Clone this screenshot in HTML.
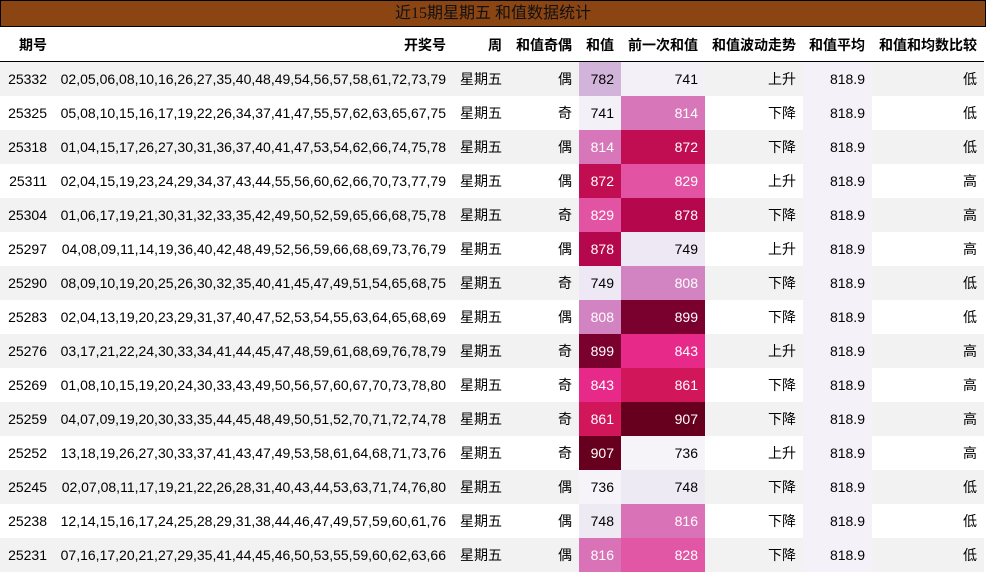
<!DOCTYPE html>
<html><head><meta charset="utf-8"><style>
body{margin:0;background:#fff;font-family:"Liberation Sans","Noto Sans CJK SC",sans-serif;font-size:14px;color:#000;}
.t{position:absolute;left:0;top:0;width:984px;height:25px;background:#8b4513;border:1px solid #000;text-align:center;line-height:25px;font-size:16px;font-family:"Liberation Serif","Noto Sans CJK SC",serif;color:#111;}
table{position:absolute;left:0;top:28px;border-collapse:collapse;width:984px;table-layout:fixed}
th{height:33px;font-weight:bold;text-align:right;padding:0 7px 0 0;border-bottom:1px solid #000;white-space:nowrap;overflow:visible}
td{height:34px;padding:0 7px 0 0;text-align:right;white-space:nowrap;overflow:visible}
tr>*:first-child{padding-right:8px}
tr>*:nth-child(2),tr>*:nth-child(3){padding-right:6px}
tbody tr:nth-child(odd) td{background:#f2f2f2}
tbody tr td.a{background:#f4f2f8 !important}
td.w{color:#fff}
</style></head><body>
<div class="t">近15期星期五 和值数据统计</div>
<table>
<colgroup><col style="width:55px"><col style="width:397px"><col style="width:56px"><col style="width:71px"><col style="width:42px"><col style="width:84px"><col style="width:98px"><col style="width:69px"><col style="width:112px"></colgroup>
<thead><tr><th>期号</th><th>开奖号</th><th>周</th><th>和值奇偶</th><th>和值</th><th>前一次和值</th><th>和值波动走势</th><th>和值平均</th><th>和值和均数比较</th></tr></thead>
<tbody>
<tr><td>25332</td><td>02,05,06,08,10,16,26,27,35,40,48,49,54,56,57,58,61,72,73,79</td><td>星期五</td><td>偶</td><td style="background:#d2b3d9!important">782</td><td style="background:#f3f0f7!important">741</td><td>上升</td><td class="a">818.9</td><td>低</td></tr>
<tr><td>25325</td><td>05,08,10,15,16,17,19,22,26,34,37,41,47,55,57,62,63,65,67,75</td><td>星期五</td><td>奇</td><td style="background:#f3f0f7">741</td><td class="w" style="background:#d777ba">814</td><td>下降</td><td class="a">818.9</td><td>低</td></tr>
<tr><td>25318</td><td>01,04,15,17,26,27,30,31,36,37,40,41,47,53,54,62,66,74,75,78</td><td>星期五</td><td>偶</td><td class="w" style="background:#d777ba!important">814</td><td class="w" style="background:#c10d51!important">872</td><td>下降</td><td class="a">818.9</td><td>低</td></tr>
<tr><td>25311</td><td>02,04,15,19,23,24,29,34,37,43,44,55,56,60,62,66,70,73,77,79</td><td>星期五</td><td>偶</td><td class="w" style="background:#c10d51">872</td><td class="w" style="background:#e254a3">829</td><td>上升</td><td class="a">818.9</td><td>高</td></tr>
<tr><td>25304</td><td>01,06,17,19,21,30,31,32,33,35,42,49,50,52,59,65,66,68,75,78</td><td>星期五</td><td>奇</td><td class="w" style="background:#e254a3!important">829</td><td class="w" style="background:#b5084c!important">878</td><td>下降</td><td class="a">818.9</td><td>高</td></tr>
<tr><td>25297</td><td>04,08,09,11,14,19,36,40,42,48,49,52,56,59,66,68,69,73,76,79</td><td>星期五</td><td>偶</td><td class="w" style="background:#b5084c">878</td><td style="background:#ede8f3">749</td><td>上升</td><td class="a">818.9</td><td>高</td></tr>
<tr><td>25290</td><td>08,09,10,19,20,25,26,30,32,35,40,41,45,47,49,51,54,65,68,75</td><td>星期五</td><td>奇</td><td style="background:#ede8f3!important">749</td><td class="w" style="background:#d283c1!important">808</td><td>下降</td><td class="a">818.9</td><td>低</td></tr>
<tr><td>25283</td><td>02,04,13,19,20,23,29,31,37,40,47,52,53,54,55,63,64,65,68,69</td><td>星期五</td><td>偶</td><td class="w" style="background:#d283c1">808</td><td class="w" style="background:#7a002d">899</td><td>下降</td><td class="a">818.9</td><td>低</td></tr>
<tr><td>25276</td><td>03,17,21,22,24,30,33,34,41,44,45,47,48,59,61,68,69,76,78,79</td><td>星期五</td><td>奇</td><td class="w" style="background:#7a002d!important">899</td><td class="w" style="background:#e7298a!important">843</td><td>上升</td><td class="a">818.9</td><td>高</td></tr>
<tr><td>25269</td><td>01,08,10,15,19,20,24,30,33,43,49,50,56,57,60,67,70,73,78,80</td><td>星期五</td><td>奇</td><td class="w" style="background:#e7298a">843</td><td class="w" style="background:#d11659">861</td><td>下降</td><td class="a">818.9</td><td>高</td></tr>
<tr><td>25259</td><td>04,07,09,19,20,30,33,35,44,45,48,49,50,51,52,70,71,72,74,78</td><td>星期五</td><td>奇</td><td class="w" style="background:#d11659!important">861</td><td class="w" style="background:#67001f!important">907</td><td>下降</td><td class="a">818.9</td><td>高</td></tr>
<tr><td>25252</td><td>13,18,19,26,27,30,33,37,41,43,47,49,53,58,61,64,68,71,73,76</td><td>星期五</td><td>奇</td><td class="w" style="background:#67001f">907</td><td style="background:#f7f4f9">736</td><td>上升</td><td class="a">818.9</td><td>高</td></tr>
<tr><td>25245</td><td>02,07,08,11,17,19,21,22,26,28,31,40,43,44,53,63,71,74,76,80</td><td>星期五</td><td>偶</td><td style="background:#f7f4f9!important">736</td><td style="background:#eeeaf3!important">748</td><td>下降</td><td class="a">818.9</td><td>低</td></tr>
<tr><td>25238</td><td>12,14,15,16,17,24,25,28,29,31,38,44,46,47,49,57,59,60,61,76</td><td>星期五</td><td>偶</td><td style="background:#eeeaf3">748</td><td class="w" style="background:#da72b7">816</td><td>下降</td><td class="a">818.9</td><td>低</td></tr>
<tr><td>25231</td><td>07,16,17,20,21,27,29,35,41,44,45,46,50,53,55,59,60,62,63,66</td><td>星期五</td><td>偶</td><td class="w" style="background:#da72b7!important">816</td><td class="w" style="background:#e156a5!important">828</td><td>下降</td><td class="a">818.9</td><td>低</td></tr>
</tbody></table>
</body></html>
